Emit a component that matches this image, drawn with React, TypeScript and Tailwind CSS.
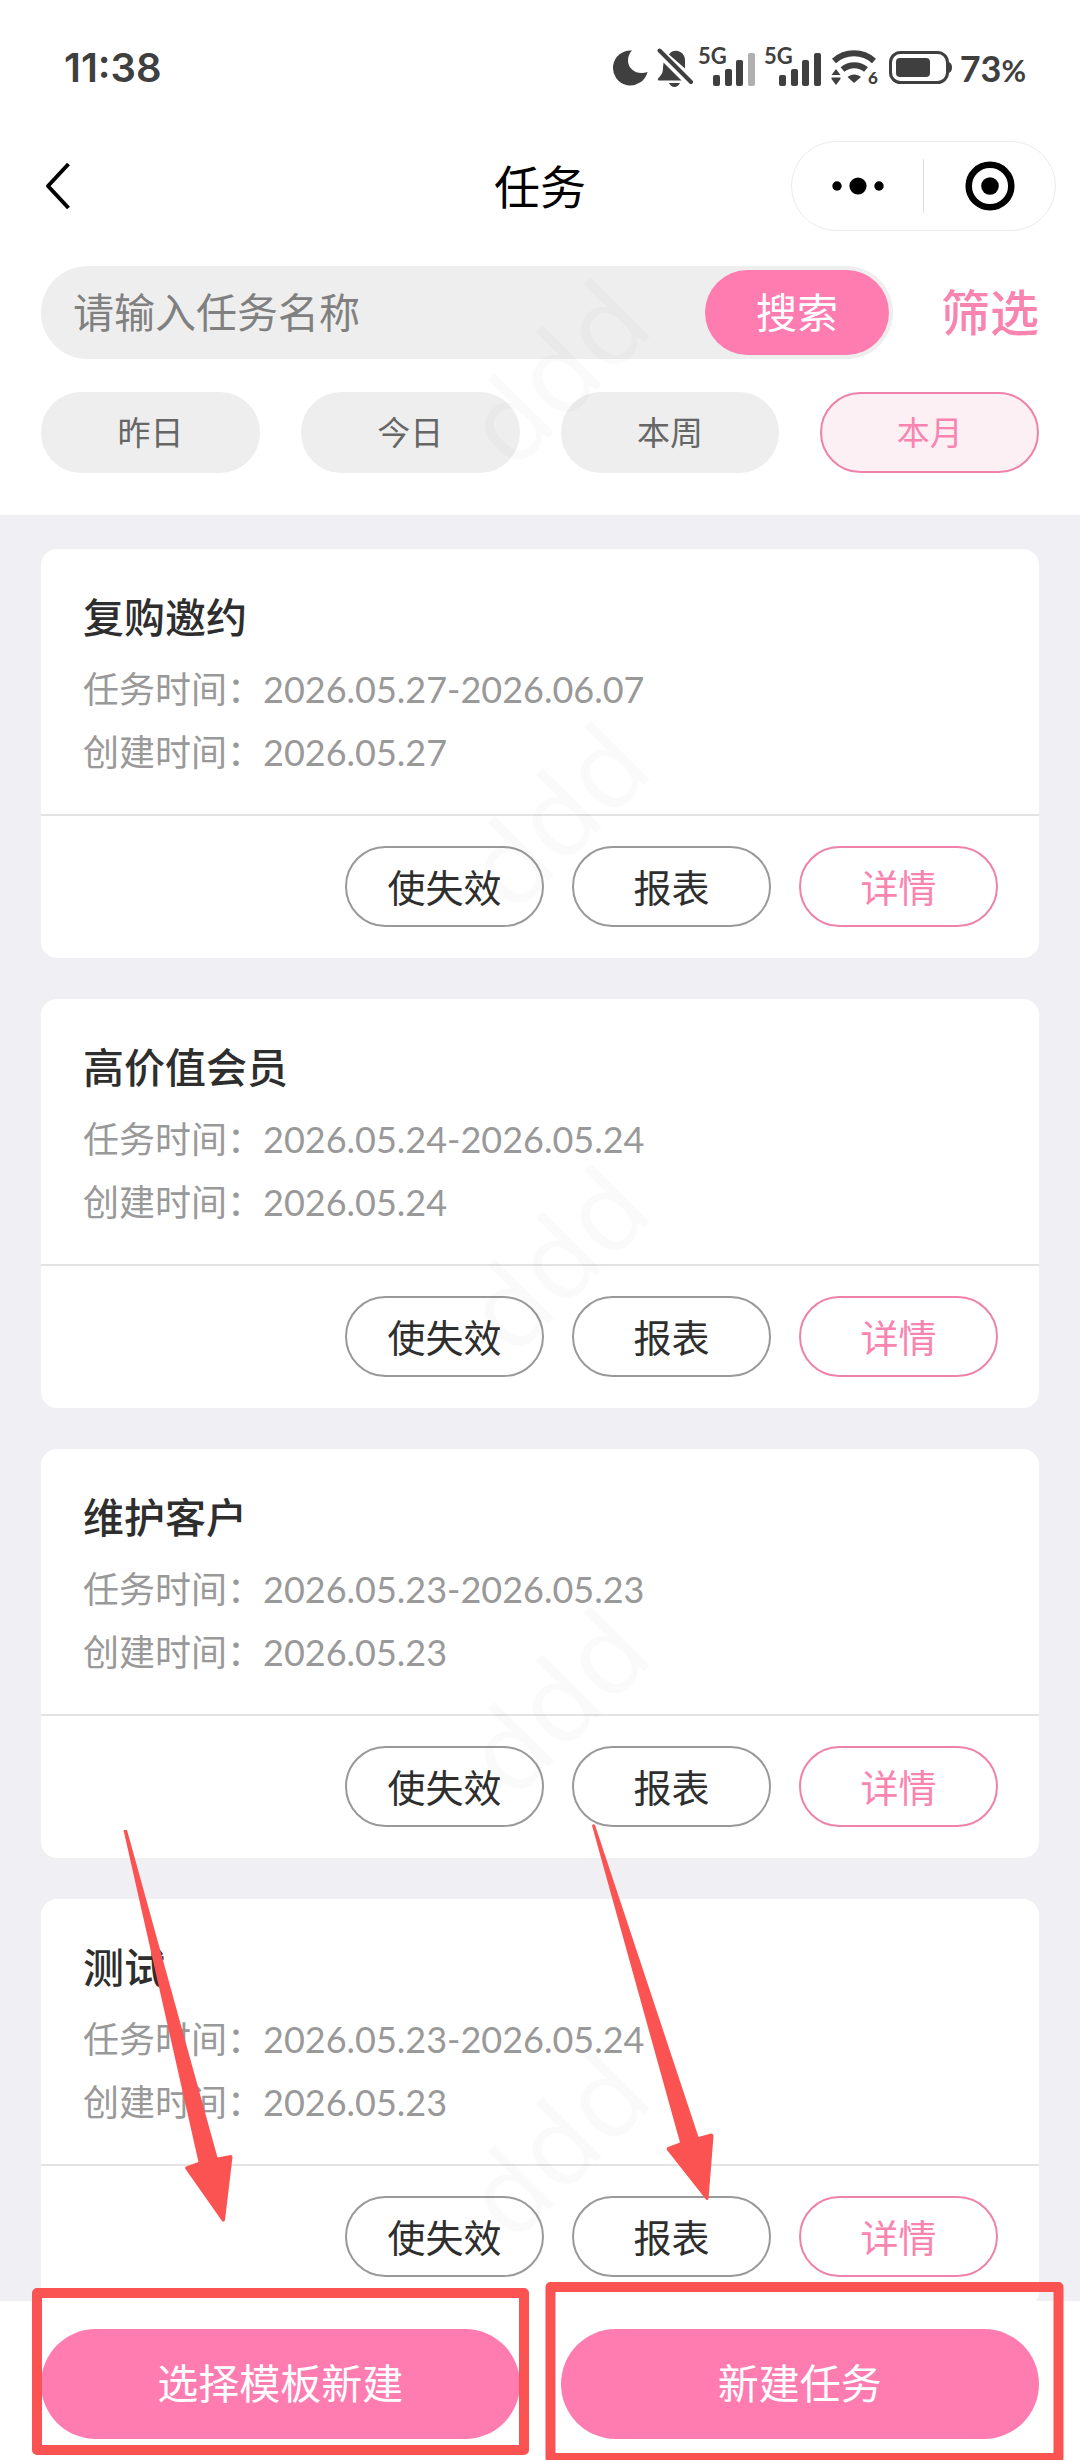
import { useState } from "react";
import clsx from "clsx";

type Task = {
  id: number;
  title: string;
  period: string;
  createdAt: string;
};

const TASKS: Task[] = [
  { id: 1, title: "复购邀约", period: "2026.05.27-2026.06.07", createdAt: "2026.05.27" },
  { id: 2, title: "高价值会员", period: "2026.05.24-2026.05.24", createdAt: "2026.05.24" },
  { id: 3, title: "维护客户", period: "2026.05.23-2026.05.23", createdAt: "2026.05.23" },
  { id: 4, title: "测试", period: "2026.05.23-2026.05.24", createdAt: "2026.05.23" },
];

const RANGES = ["昨日", "今日", "本周", "本月"];

function Signal({ weak = false }: { weak?: boolean }) {
  return (
    <svg width="58" height="52" viewBox="0 -7 58 52" fill="#3f3f3f">
      <text x="0" y="15" fontSize="22" fontWeight="700" className="font-['Lato',sans-serif]">
        5G
      </text>
      <rect x="15" y="26" width="7" height="11" rx="2" />
      <rect x="27" y="20" width="7" height="17" rx="2" />
      <rect x="38" y="11" width="7" height="26" rx="2" />
      <rect x="50" y="4" width="7" height="33" rx="2" fill={weak ? "#b0b0b0" : "#3f3f3f"} />
    </svg>
  );
}

function StatusBar() {
  return (
    <div className="flex h-[136px] items-center justify-between pr-[54px] pl-16 text-[#3f3f3f]">
      <span className="font-['Inter',sans-serif] text-[40px] font-semibold">11:38</span>
      <div className="flex items-center">
        {/* do not disturb */}
        <svg width="36" height="36" viewBox="0 0 36 36" fill="currentColor">
          <path d="M20 0.5A17.5 17.5 0 1 0 35.5 22C26 25.5 16 20 16 10.500C16 6.500 17.500 3 20 0.500Z" />
        </svg>
        {/* muted bell */}
        <svg className="ml-[9px]" width="37" height="40" viewBox="0 0 37 40" fill="currentColor">
          <path d="M12 6.500C14 3 18 2.500 20.500 3C25.500 4 28 8 28 12.500V20.500Z" />
          <path d="M6.500 14.500L24.500 32.500H2C0.500 32.500 0.500 31 1.500 30C5 26.500 6 24 6 20Z" />
          <path d="M12 35H23C21.500 37.800 19.800 39 17.500 39C15.200 39 13.300 37.800 12 35Z" />
          <path d="M2.500 2.500L34 34" stroke="currentColor" strokeWidth="4" strokeLinecap="round" />
        </svg>
        <div className="ml-1 flex gap-2">
          <Signal weak />
          <Signal />
        </div>
        {/* wifi 6 */}
        <svg className="ml-[9px]" width="48" height="52" viewBox="0 -5 48 52" fill="currentColor">
          <path d="M3 14A30 30 0 0 1 43 14" fill="none" stroke="currentColor" strokeWidth="6" />
          <path d="M11.500 22.500A18.500 18.500 0 0 1 35 22.500" fill="none" stroke="currentColor" strokeWidth="6" />
          <path d="M23 36L16.500 30C20 26.500 26.500 26.500 30 30Z" />
          <path d="M5 22L9.500 28H0.500ZM0.500 30.500H9.500V32L5 38L0.500 32Z" />
          <text x="37" y="37" fontSize="17" fontWeight="900" className="font-['Lato',sans-serif]">
            6
          </text>
        </svg>
        {/* battery */}
        <svg className="ml-[10px]" width="64" height="34" viewBox="0 0 64 34">
          <rect x="1.500" y="1.500" width="57" height="30" rx="10" fill="none" stroke="currentColor" strokeWidth="3" />
          <rect x="7" y="7" width="34" height="19" rx="4" fill="currentColor" />
          <path d="M59 11C61.500 11 63 13.500 63 16.500S61.500 22 59 22Z" fill="currentColor" />
        </svg>
        <span className="ml-[7px] font-['Lato',sans-serif] text-[36px] font-bold">
          73<span className="text-[30px]">%</span>
        </span>
      </div>
    </div>
  );
}

function NavBar() {
  return (
    <div className="grid h-[100px] grid-cols-[1fr_auto_1fr] items-center px-6">
      <button type="button" aria-label="返回" className="ml-4 justify-self-start">
        <svg width="32" height="48" viewBox="0 0 32 48" fill="none" stroke="#000" strokeWidth="4">
          <path d="M28.500 2L8 24L28.500 46" strokeLinejoin="round" />
        </svg>
      </button>
      <h1 className="text-[46px] text-black">任务</h1>
      <div className="flex h-[90px] w-[265px] items-center justify-self-end rounded-full border border-[#ebebeb]">
        <button type="button" aria-label="更多" className="flex flex-1 justify-center">
          <svg width="54" height="20" viewBox="0 0 54 20">
            <circle cx="6" cy="10" r="4.700" />
            <circle cx="27" cy="10" r="8.600" />
            <circle cx="48" cy="10" r="4.700" />
          </svg>
        </button>
        <span className="h-[54px] w-px bg-[#dcdcdc]" />
        <button type="button" aria-label="关闭" className="flex flex-1 justify-center">
          <svg width="50" height="50" viewBox="0 0 50 50">
            <circle cx="25" cy="25" r="21.300" fill="none" stroke="#000" strokeWidth="6.500" />
            <circle cx="25" cy="25" r="8.800" />
          </svg>
        </button>
      </div>
    </div>
  );
}

function TaskCard({ task }: { task: Task }) {
  const button = "h-[81px] w-[199px] rounded-full border-2 text-[38px] leading-none";

  return (
    <article className="rounded-[16px] bg-white">
      <div className="h-[265px] px-[42px] pt-[41px]">
        <h2 className="text-[41px] leading-[56px] font-medium text-[#2e2e2e]">{task.title}</h2>
        <div className="mt-3 text-[36px] leading-[63px] text-[#999]">
          <p>任务时间：{task.period}</p>
          <p>创建时间：{task.createdAt}</p>
        </div>
      </div>
      <div className="flex justify-end gap-7 border-t-2 border-[#e3e3e3] px-[41px] pt-[30px] pb-[31px]">
        <button type="button" className={clsx(button, "border-[#999] text-[#2e2e2e]")}>
          使失效
        </button>
        <button type="button" className={clsx(button, "border-[#999] text-[#2e2e2e]")}>
          报表
        </button>
        <button type="button" className={clsx(button, "border-[#ee82aa] text-[#f984b0]")}>
          详情
        </button>
      </div>
    </article>
  );
}

function Watermark() {
  return (
    <div className="pointer-events-none absolute inset-0 overflow-hidden pt-[150px] pl-7" aria-hidden="true">
      {[0, 1, 2, 3, 4].map((i) => (
        <div key={i} className="flex h-[443px] items-center justify-center">
          <span className="-rotate-45 font-['Noto_Sans',sans-serif] text-[110px] text-black/[0.02]">ddd</span>
        </div>
      ))}
    </div>
  );
}

// red frames round the two create buttons, with an arrow to each
function Highlights() {
  return (
    <svg className="pointer-events-none absolute inset-0 h-full w-full" viewBox="0 0 1080 2460" fill="#fb5252">
      <path d="M123.500 1830L127 1830L217.500 2157.500L230.500 2155Q232.500 2155 232.500 2157L225 2220Q224 2223 222 2221L185.500 2169Q184.500 2167.500 186 2166.500L198.500 2162Z" />
      <path d="M592 1825.500Q593.500 1823.500 595 1825L698.500 2137L711 2133.500Q713.500 2133.500 713.500 2136L708.500 2199Q707.500 2201 706 2199.500L667 2150Q666 2148 668 2147L680 2142.500Z" />
      <rect x="37" y="2293" width="487" height="157" fill="none" stroke="#fb5252" strokeWidth="10" strokeLinejoin="round" />
      <rect x="550.500" y="2287" width="508" height="171" fill="none" stroke="#fb5252" strokeWidth="10" strokeLinejoin="round" />
    </svg>
  );
}

export default function App() {
  const [range, setRange] = useState("本月");
  const [keyword, setKeyword] = useState("");

  return (
    <div className="relative flex h-screen flex-col overflow-hidden bg-[#efeff4] font-['Lato','Noto_Sans_CJK_SC',sans-serif]">
      <header className="bg-white">
        <StatusBar />
        <NavBar />
        <div className="px-[41px] pt-[30px] pb-[42px]">
          <div className="flex items-center">
            <div className="flex h-[93px] flex-1 items-center rounded-full bg-[#eee] pr-1 pl-8">
              <input
                type="text"
                aria-label="请输入任务名称"
                placeholder="请输入任务名称"
                value={keyword}
                onChange={(e) => setKeyword(e.target.value)}
                className="h-full min-w-0 flex-1 bg-transparent text-[41px] text-[#333] outline-none placeholder:text-[#808080]"
              />
              <button type="button" className="h-[85px] w-[184px] rounded-full bg-[#ff7cb1] text-[41px] text-white">
                搜索
              </button>
            </div>
            <button type="button" className="ml-12 text-[49px] leading-none font-medium text-[#f984b0]">
              筛选
            </button>
          </div>
          <div className="mt-[33px] grid grid-cols-4 gap-[41px]">
            {RANGES.map((item) => (
              <button
                key={item}
                type="button"
                onClick={() => setRange(item)}
                className={clsx(
                  "h-[81px] rounded-full border-2 text-[33px] leading-none",
                  item === range
                    ? "border-[#ee82aa] bg-[#fdf0f5] text-[#f984b0]"
                    : "border-[#eee] bg-[#eee] text-[#666]",
                )}
              >
                {item}
              </button>
            ))}
          </div>
        </div>
      </header>

      <main className="flex min-h-0 flex-1 flex-col gap-[41px] overflow-y-auto px-[41px] pt-[34px] [scrollbar-width:none]">
        {TASKS.map((task) => (
          <TaskCard key={task.id} task={task} />
        ))}
      </main>

      <footer className="grid grid-cols-2 gap-[41px] bg-white px-[41px] pt-7 pb-[21px]">
        <button type="button" className="h-[110px] rounded-full bg-[#ff7cb1] text-[41px] text-white">
          选择模板新建
        </button>
        <button type="button" className="h-[110px] rounded-full bg-[#ff7cb1] text-[41px] text-white">
          新建任务
        </button>
      </footer>

      <Watermark />
      <Highlights />
    </div>
  );
}
